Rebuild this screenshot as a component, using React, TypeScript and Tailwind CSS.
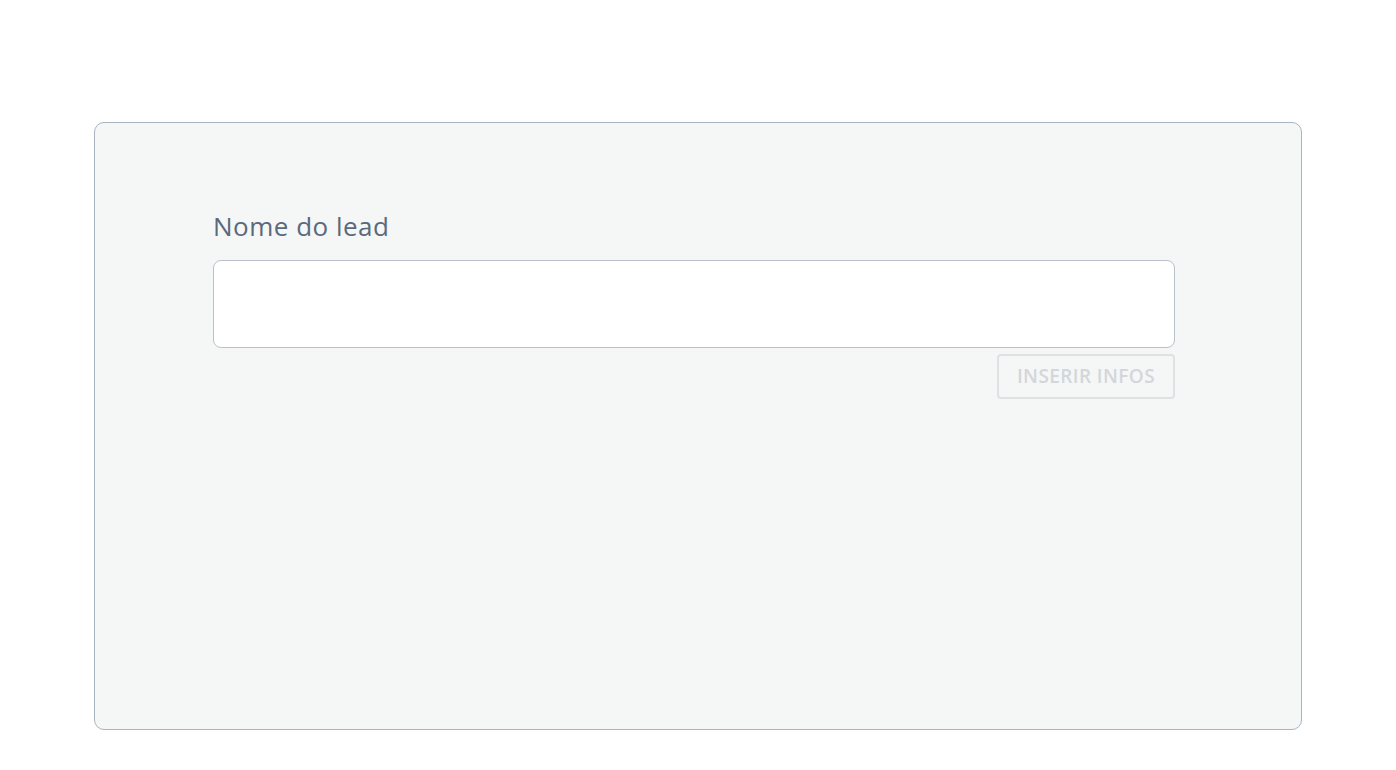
export default function App() {
  return (
    <div className="min-h-screen bg-white pt-[122px] font-['Open_Sans','Lato',sans-serif]">
      <div className="mx-[94px] h-[608px] rounded-[10px] border border-[#a9b4c1] bg-[#f5f6f6] pl-[118px] pr-[126px] pt-[87px]">
        <label className="block text-[26px] leading-[32px] tracking-[0.5px] text-[#5b697c]">Nome do lead</label>
        <div className="mt-[18px] h-[88px] rounded-[8px] border border-[#b9c1cb] bg-white" />
        <div className="mt-[6px] flex justify-end">
          <button className="h-[45px] w-[178px] rounded-[4px] border-2 border-[#dfe2e5] text-[19px] font-semibold tracking-[0.4px] text-[#d3d6da]">
            INSERIR INFOS
          </button>
        </div>
      </div>
    </div>
  );
}
